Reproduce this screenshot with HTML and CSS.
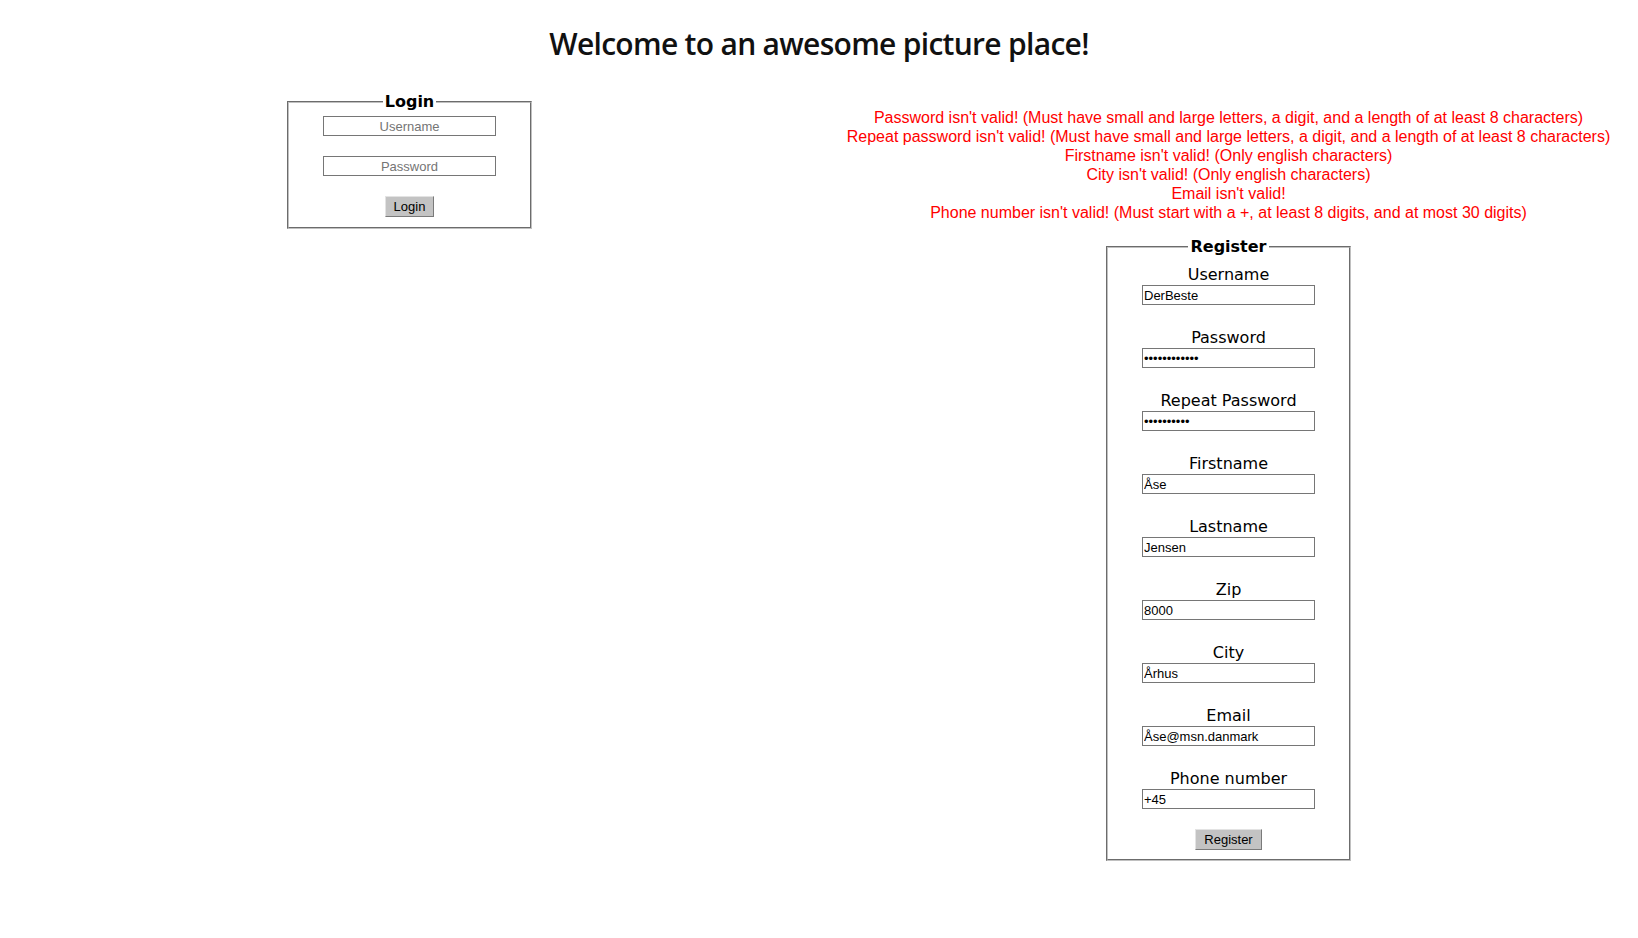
FILE: index.html
```html
<!DOCTYPE html>
<html lang="en">
<head>
<meta charset="utf-8">
<title>Awesome picture place</title>
<link rel="stylesheet" href="styles.css">
</head>
<body>
<h1 class="title">Welcome to an awesome picture place!</h1>
<div class="columns">
  <section class="col">
    <form class="box login-box">
      <fieldset class="frame login-frame">
        <legend class="legend">Login</legend>
        <input class="field field-center" type="text" placeholder="Username">
        <input class="field field-center" type="password" placeholder="Password">
        <button class="btn" type="button">Login</button>
      </fieldset>
    </form>
  </section>
  <section class="col">
    <div class="errors">
      <p class="error">Password isn't valid! (Must have small and large letters, a digit, and a length of at least 8 characters)</p>
      <p class="error">Repeat password isn't valid! (Must have small and large letters, a digit, and a length of at least 8 characters)</p>
      <p class="error">Firstname isn't valid! (Only english characters)</p>
      <p class="error">City isn't valid! (Only english characters)</p>
      <p class="error">Email isn't valid!</p>
      <p class="error">Phone number isn't valid! (Must start with a +, at least 8 digits, and at most 30 digits)</p>
    </div>
    <form class="box register-box">
      <fieldset class="frame register-frame">
        <legend class="legend">Register</legend>
        <label class="group"><span class="label">Username</span><input class="field" type="text" value="DerBeste"></label>
        <label class="group"><span class="label">Password</span><input class="field" type="password" value="abcdefghijkl"></label>
        <label class="group"><span class="label">Repeat Password</span><input class="field" type="password" value="abcdefghij"></label>
        <label class="group"><span class="label">Firstname</span><input class="field" type="text" value="Åse"></label>
        <label class="group"><span class="label">Lastname</span><input class="field" type="text" value="Jensen"></label>
        <label class="group"><span class="label">Zip</span><input class="field" type="text" value="8000"></label>
        <label class="group"><span class="label">City</span><input class="field" type="text" value="Århus"></label>
        <label class="group"><span class="label">Email</span><input class="field" type="text" value="Åse@msn.danmark"></label>
        <label class="group"><span class="label">Phone number</span><input class="field" type="text" value="+45"></label>
        <button class="btn" type="button">Register</button>
      </fieldset>
    </form>
  </section>
</div>
</body>
</html>
```

FILE: styles.css
```css
html, body {
  margin: 0;
  padding: 0;
  background: #ffffff;
}

body {
  font-family: "DejaVu Sans", sans-serif;
  color: #000;
}

.title {
  margin: 24px 0 0;
  height: 40px;
  text-align: center;
  font-family: "Open Sans", sans-serif;
  font-weight: 600;
  font-size: 30px;
  line-height: 40px;
  color: #111;
  letter-spacing: -0.7px;
}

.columns {
  display: flex;
  margin-top: 28px;
}

.col {
  flex: 1 1 0;
  display: flex;
  flex-direction: column;
  align-items: center;
}

.box {
  margin: 0;
}

.frame {
  box-sizing: border-box;
  width: 245px;
  margin: 0;
  border: 2px groove #c0c0c0;
  display: flex;
  flex-direction: column;
  align-items: center;
}

.legend {
  margin: 0 auto;
  font-family: "DejaVu Sans", sans-serif;
  font-weight: bold;
  font-size: 16px;
  line-height: 20px;
  padding: 0 2px;
}

.login-frame {
  padding: 4px 0 10px;
  gap: 20px;
}

.register-frame {
  padding: 8px 0 9px;
}

.field {
  box-sizing: border-box;
  width: 173px;
  height: 20px;
  margin: 0;
  padding: 1px 1px;
  border: 1px solid #767676;
  background: #fff;
  font-family: "Liberation Sans", Arial, sans-serif;
  font-size: 13px;
  color: #000;
  outline: none;
}

.field-center {
  text-align: center;
}

.field::placeholder {
  color: #757575;
}

.btn {
  box-sizing: border-box;
  height: 21px;
  margin: 0;
  padding: 0 8px;
  background: #c3c3c3;
  border: 1px solid;
  border-color: #e3e3e3 #7a7a7a #7a7a7a #e3e3e3;
  font-family: "Liberation Sans", Arial, sans-serif;
  font-size: 13px;
  color: #000;
}

.errors {
  margin-top: 16px;
  text-align: center;
}

.error {
  margin: 0;
  color: #ff0000;
  font-family: "Liberation Sans", sans-serif;
  font-size: 16px;
  line-height: 19px;
  white-space: nowrap;
}

.register-box {
  margin-top: 15px;
}

.group {
  display: flex;
  flex-direction: column;
  align-items: center;
  margin-bottom: 23px;
}

.label {
  font-size: 16px;
  line-height: 20px;
  color: #000;
}

.register-frame .group:last-of-type {
  margin-bottom: 20px;
}
```
